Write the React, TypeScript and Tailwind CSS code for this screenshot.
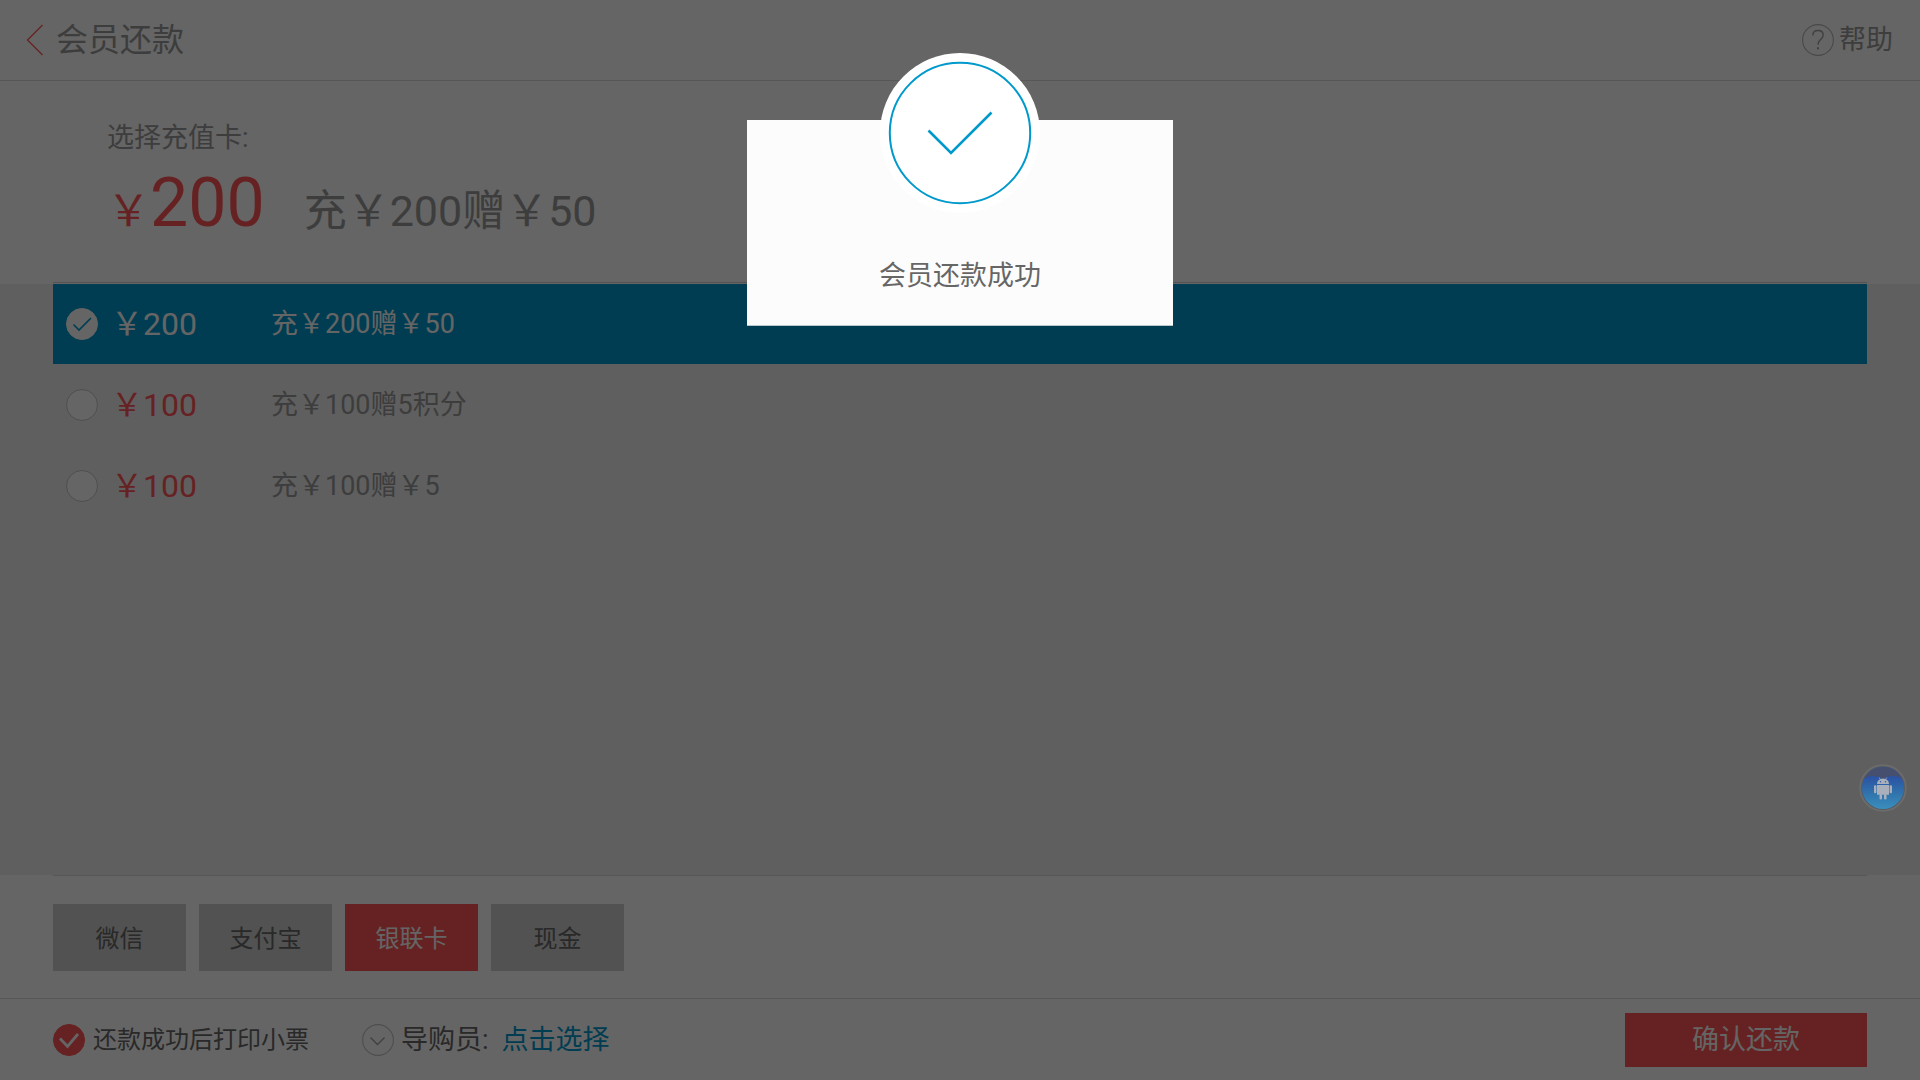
import { useState } from "react";

const cards = [
  { id: "a", price: "￥200", desc: "充￥200赠￥50" },
  { id: "b", price: "￥100", desc: "充￥100赠5积分" },
  { id: "c", price: "￥100", desc: "充￥100赠￥5" },
];

const methods = ["微信", "支付宝", "银联卡", "现金"];

function Header() {
  return (
    <header className="flex h-[81px] items-center justify-between border-b border-[#d9d9d9] pr-[27px] pl-[26px] text-[#999999]">
      <button type="button" className="flex items-center gap-3 text-[32px] leading-10">
        <svg width="18" height="32" viewBox="0 0 18 32" fill="none" stroke="#ff5555" strokeWidth="1.3" aria-hidden="true">
          <path d="M16.5 1 1.5 16l15 15" />
        </svg>
        会员还款
      </button>
      <button type="button" className="flex items-center gap-[5px] text-[27px] leading-8">
        <svg width="32" height="32" viewBox="0 0 32 32" fill="none" stroke="#a0a0a0" aria-hidden="true">
          <circle cx="16" cy="16" r="15.4" stroke="#b4b4b4" strokeWidth="1.1" />
          <path d="M10.8 11.5c0-3.2 2.2-5 5.2-5s5.2 1.800 5.200 4.600c0 2.400-1.400 3.600-3 4.900-1.400 1.200-2.200 2.200-2.200 4.800" strokeWidth="1.4" />
          <path d="M15 24.200h2" strokeWidth="2" />
        </svg>
        帮助
      </button>
    </header>
  );
}

function Summary() {
  return (
    <section className="bg-[#fcfcfc] px-[53px] pb-px">
      <div className="border-b border-[#cccccc] px-[54px] pt-[37px] pb-[31px] text-[#999999]">
        <h2 className="text-[27px] leading-10">选择充值卡:</h2>
        <p className="mt-1.5 flex items-baseline text-[43px] leading-[79px]">
          <span className="text-[#ff5555]">
            ￥<span className="text-[68px]">200</span>
          </span>
          <span className="ml-[39px]">充￥200赠￥50</span>
        </p>
      </div>
    </section>
  );
}

function CardList() {
  const [selected, setSelected] = useState("a");
  return (
    <section className="flex flex-1 flex-col gap-px bg-[#eeeeee] px-[53px]">
      {cards.map((c) => {
        const on = c.id === selected;
        return (
          <label
            key={c.id}
            className={`flex h-20 items-center pl-[13px] ${on ? "bg-[#0099cc] text-[#fcfcfc]" : "text-[#999999]"}`}
          >
            <span className="relative flex size-8">
              <input
                type="radio"
                name="card"
                checked={on}
                onChange={() => setSelected(c.id)}
                className={`size-8 appearance-none rounded-full border bg-[#fcfcfc] ${on ? "border-[#fcfcfc]" : "border-[#c4c4c4]"}`}
              />
              {on && (
                <svg className="pointer-events-none absolute inset-0" viewBox="0 0 32 32" fill="none" stroke="#0099cc" strokeWidth="1.6" aria-hidden="true">
                  <path d="m7.500 16.500 5.500 5.500L25 10" />
                </svg>
              )}
            </span>
            <span className={`ml-[13px] w-40 text-[32px] leading-10 ${on ? "" : "text-[#ff5555]"}`}>{c.price}</span>
            <span className="text-[27px] leading-10">{c.desc}</span>
          </label>
        );
      })}
    </section>
  );
}

function Methods() {
  const [method, setMethod] = useState("银联卡");
  return (
    <section className="px-[53px]">
      <div className="flex gap-[13px] border-t border-[#d9d9d9] pt-7 pb-[27px]">
        {methods.map((m) => (
          <button
            key={m}
            type="button"
            onClick={() => setMethod(m)}
            className={`h-[67px] w-[133px] pt-0.5 text-2xl ${m === method ? "bg-[#ff5555] text-[#fcfcfc]" : "bg-[#cccccc] text-[#666666]"}`}
          >
            {m}
          </button>
        ))}
      </div>
    </section>
  );
}

function Footer() {
  const [print, setPrint] = useState(true);
  return (
    <footer className="flex h-[82px] items-center justify-between border-t border-[#d9d9d9] px-[53px] text-[#666666]">
      <div className="flex items-center">
        <label className="flex items-center gap-2 text-2xl">
          <span className="relative flex size-8">
            <input
              type="checkbox"
              checked={print}
              onChange={(e) => setPrint(e.target.checked)}
              className="size-8 appearance-none rounded-full border border-[#ff5555] checked:bg-[#ff5555]"
            />
            {print && (
              <svg className="pointer-events-none absolute inset-0" viewBox="0 0 32 32" fill="none" stroke="#fcfcfc" strokeWidth="2.800" aria-hidden="true">
                <path d="m7 14.500 7.500 8L25 10" />
              </svg>
            )}
          </span>
          还款成功后打印小票
        </label>
        <div className="ml-[53px] flex items-center text-[27px] leading-10">
          <svg width="32" height="32" viewBox="0 0 32 32" fill="none" stroke="#a0a0a0" aria-hidden="true">
            <circle cx="16" cy="16" r="15.400" stroke="#c0c0c0" strokeWidth="1.1" />
            <path d="m8.500 13.500 7 7 7-7" strokeWidth="1.400" />
          </svg>
          <span className="ml-[7px]">导购员:</span>
          <button type="button" className="ml-[13px] text-[#0099cc]">点击选择</button>
        </div>
      </div>
      <button type="button" className="h-[54px] w-[242px] bg-[#ff5555] pt-0.5 text-[27px] text-[#fcfcfc]">
        确认还款
      </button>
    </footer>
  );
}

function FloatingBall() {
  return (
    <button type="button" aria-label="Android" className="fixed right-[13px] bottom-[268px] size-12">
      <svg viewBox="0 0 48 48" aria-hidden="true">
        <defs>
          <linearGradient id="ball" x1="0" y1="0" x2="0" y2="1">
            <stop offset="0.25" stopColor="#2b54a4" />
            <stop offset="0.6" stopColor="#3071ab" />
            <stop offset="1" stopColor="#3a8fbd" />
          </linearGradient>
        </defs>
        <circle cx="24" cy="24" r="22.800" fill="#555a60" stroke="#6c6c6c" strokeWidth="1.800" />
        <circle cx="24" cy="24" r="21" fill="url(#ball)" />
        <path d="M5.300 14.500A21 21 0 0 1 42.700 14.500C37 10.500 29 11.500 24 15 19 11.500 11 10.500 5.300 14.500Z" fill="#464f6e" />
        <g fill="#a9b0bc">
          <path d="M18 20a6 5.600 0 0 1 12 0ZM18 21h12v9.800H18Z" />
          <rect x="15" y="21.200" width="2.400" height="8" rx="1" />
          <rect x="30.600" y="21.200" width="2.400" height="8" rx="1" />
          <rect x="20.500" y="30" width="2.500" height="5.500" rx="1" />
          <rect x="25" y="30" width="2.500" height="5.500" rx="1" />
        </g>
        <path d="m20.200 13.500 1.300 2.200M27.800 13.500l-1.300 2.200" stroke="#a9b0bc" strokeWidth="0.800" />
        <circle cx="21.500" cy="17.800" r="0.700" fill="#2b54a4" />
        <circle cx="26.500" cy="17.800" r="0.700" fill="#2b54a4" />
      </svg>
    </button>
  );
}

function SuccessDialog() {
  return (
    <div className="fixed inset-0 flex items-start justify-center bg-black/60 pt-[120px]">
      <div
        role="dialog"
        aria-modal="true"
        aria-labelledby="dialog-text"
        className="relative flex h-[206px] w-[426px] items-end justify-center border-b border-[#b8c8cc] bg-[#fcfcfc] pb-[29px]"
      >
        <svg className="absolute -top-[67px] left-[133px] size-40" viewBox="0 0 160 160" fill="none" aria-hidden="true">
          <circle cx="80" cy="80" r="80" fill="#ffffff" />
          <circle cx="80" cy="80" r="70.200" stroke="#0099cc" strokeWidth="2" />
          <path d="m48.500 77.500 22.500 22.500L111.500 59.500" stroke="#0099cc" strokeWidth="2.600" />
        </svg>
        <p id="dialog-text" className="text-[27px] leading-10 text-[#666666]">会员还款成功</p>
      </div>
    </div>
  );
}

export default function App() {
  return (
    <div className="flex min-h-screen flex-col bg-[#fcfcfc] font-[Roboto,'Noto_Sans_CJK_SC',sans-serif]">
      <Header />
      <main className="flex flex-1 flex-col">
        <Summary />
        <CardList />
        <Methods />
      </main>
      <Footer />
      <SuccessDialog />
      <FloatingBall />
    </div>
  );
}
